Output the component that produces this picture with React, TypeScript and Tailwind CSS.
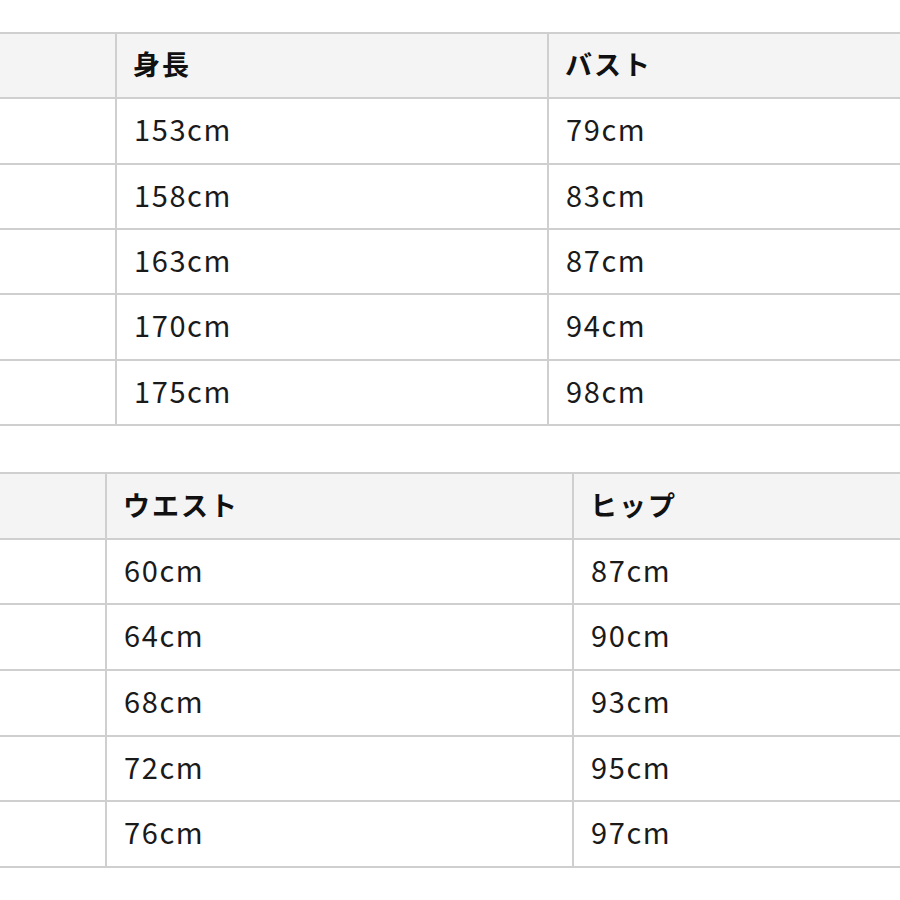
const tableOne = {
  first: 115,
  second: 432,
  headers: ['身長', 'バスト'],
  rows: [
    ['153cm', '79cm'],
    ['158cm', '83cm'],
    ['163cm', '87cm'],
    ['170cm', '94cm'],
    ['175cm', '98cm'],
  ],
};

const tableTwo = {
  first: 105,
  second: 467,
  headers: ['ウエスト', 'ヒップ'],
  rows: [
    ['60cm', '87cm'],
    ['64cm', '90cm'],
    ['68cm', '93cm'],
    ['72cm', '95cm'],
    ['76cm', '97cm'],
  ],
};

const font = { fontFamily: '"Noto Sans CJK JP", "Noto Sans", sans-serif' };

function SizeTable({ first, second, headers, rows, rowH }: typeof tableOne & { rowH: string }) {
  return (
    <div className="w-[1100px] border-t-2 border-[#cfcfcf]">
      <div className={`flex ${rowH} border-b-2 border-[#cfcfcf] bg-[#f4f4f4]`}>
        <div className="shrink-0 border-r-2 border-[#cfcfcf]" style={{ width: first + 2 }} />
        <div
          className="flex shrink-0 items-center border-r-2 border-[#cfcfcf] pb-[2px] pl-[16px] text-[27px] font-bold tracking-[2px] text-[#111]"
          style={{ width: second }}
        >
          {headers[0]}
        </div>
        <div className="flex flex-1 items-center pb-[2px] pl-[16px] text-[27px] font-bold tracking-[2px] text-[#111]">
          {headers[1]}
        </div>
      </div>
      {rows.map((r, i) => (
        <div key={i} className={`flex ${rowH} border-b-2 border-[#cfcfcf] bg-white`}>
          <div className="shrink-0 border-r-2 border-[#cfcfcf]" style={{ width: first + 2 }} />
          <div
            className="flex shrink-0 items-center border-r-2 border-[#cfcfcf] pb-[4px] pl-[17px] text-[29px] font-normal tracking-[1.6px] text-[#1a1a1a]"
            style={{ width: second }}
          >
            {r[0]}
          </div>
          <div className="flex flex-1 items-center pb-[4px] pl-[17px] text-[29px] font-normal tracking-[1.6px] text-[#1a1a1a]">
            {r[1]}
          </div>
        </div>
      ))}
    </div>
  );
}

export default function App() {
  return (
    <div className="h-[900px] w-[900px] overflow-hidden bg-white pt-[32px]" style={font}>
      <SizeTable {...tableOne} rowH="h-[65.33px]" />
      <div className="h-[46px]" />
      <SizeTable {...tableTwo} rowH="h-[65.67px]" />
    </div>
  );
}
